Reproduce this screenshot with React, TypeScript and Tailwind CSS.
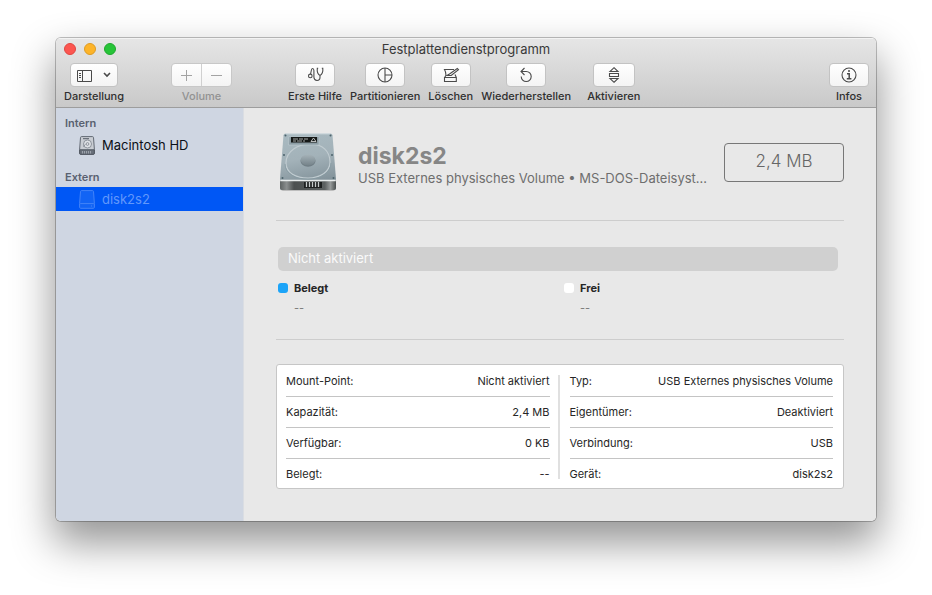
import type { ReactNode } from "react";

function ToolItem({
  label,
  children,
  className = "",
  buttonClass = "w-10",
}: {
  label: string;
  children: ReactNode;
  className?: string;
  buttonClass?: string;
}) {
  return (
    <button type="button" className={`flex shrink-0 flex-col items-center ${className}`}>
      <span
        className={`flex h-6 items-center justify-center rounded border border-[#c3c3c3] bg-linear-to-b from-white to-[#f4f4f4] text-[#4a4a4a] ${buttonClass}`}
      >
        {children}
      </span>
      <span className="mt-px whitespace-nowrap text-[11px] leading-4 font-medium">{label}</span>
    </button>
  );
}

function StrokeIcon({ children }: { children: ReactNode }) {
  return (
    <svg width="18" height="18" viewBox="0 0 18 18" fill="none" stroke="currentColor" strokeWidth="1.1" aria-hidden="true">
      {children}
    </svg>
  );
}

function SmallDrive() {
  return (
    <svg width="16" height="19" viewBox="0 0 16 19" fill="none" aria-hidden="true">
      <path d="M2.6 .6h10.8q1 0 1.100 1l.9 12v3.700q0 1-1 1H1.600q-1 0-1-1v-3.700l.9-12q.1-1 1.100-1z" fill="#c9cdd3" stroke="#626973" />
      <path d="M.7 13.800h14.600v3.600q0 .9-1 .9H1.700q-1 0-1-.9z" fill="#6a717b" stroke="#505761" />
      <path d="M3.500 15v2.500M5.500 15v2.500M7.500 15v2.500M9.500 15v2.500M11.500 15v2.500" stroke="#a9afb8" strokeWidth=".8" />
      <circle cx="8.500" cy="8" r="4" fill="#dfe2e6" stroke="#7b828c" strokeWidth=".8" />
      <circle cx="8.500" cy="8" r="1.400" stroke="#7b828c" strokeWidth=".8" />
      <path d="M4 2.700h6" stroke="#565d67" />
      <path d="M4 10.500l2.500-2" stroke="#7b828c" strokeWidth=".8" />
    </svg>
  );
}

function GhostDrive() {
  return (
    <svg width="16" height="19" viewBox="0 0 16 19" fill="none" stroke="#4a88f8" strokeWidth=".9" aria-hidden="true">
      <path d="M2.600 .6h10.800q1 0 1.100 1l.9 12v3.700q0 1-1 1H1.600q-1 0-1-1v-3.700l.9-12q.1-1 1.100-1z" fill="#1264f5" />
      <path d="M.7 14.200q.3-.6 1-.6h12.600q.7 0 1 .6M12 16h1" />
    </svg>
  );
}

function LargeDrive() {
  return (
    <svg className="shrink-0" width="64" height="64" viewBox="0 0 64 64" fill="none" aria-hidden="true">
      <defs>
        <linearGradient id="plate" x1="0" y1="0" x2="0.2" y2="1">
          <stop offset="0" stopColor="#a9bac1" />
          <stop offset="0.5" stopColor="#a3b2b9" />
          <stop offset="1" stopColor="#7f8f97" />
        </linearGradient>
        <linearGradient id="front" x1="0" y1="0" x2="1" y2="0">
          <stop offset="0" stopColor="#5e6363" />
          <stop offset="0.12" stopColor="#8b8f8f" />
          <stop offset="0.25" stopColor="#4c5050" />
          <stop offset="0.8" stopColor="#5c6161" />
          <stop offset="0.9" stopColor="#969a9a" />
          <stop offset="1" stopColor="#4a4f4f" />
        </linearGradient>
        <linearGradient id="hub" x1="0" y1="0" x2="0" y2="1">
          <stop offset="0" stopColor="#a5b2b8" />
          <stop offset="1" stopColor="#75838a" />
        </linearGradient>
      </defs>
      <rect x="5" y="57" width="54" height="4" rx="2" fill="#bdbdbd" />
      <path d="M9.500 3.500h45q1.800 0 2 1.800L60 49v9q0 2-2 2H6q-2 0-2-2v-9L7.500 5.300Q7.700 3.500 9.500 3.500z" fill="url(#plate)" />
      <path d="M9.500 3.800h45" stroke="#d4dde1" />
      <path d="M4 50h56v8q0 2-2 2H6q-2 0-2-2z" fill="url(#front)" />
      <path d="M4.200 50.500h55.600" stroke="#e9eded" strokeWidth="1.400" />
      <rect x="28" y="52" width="18" height="6" fill="#1d2020" />
      <path d="M30.500 52v5M33.500 52v5M36.500 52v5M39.500 52v5M42.500 52v5" stroke="#c5caca" strokeWidth="1.300" />
      <path d="M10 33c0 10 10 15 22 15s22-6 22-16c0-11-8-18-19-18C22 14 10 21 10 33z" stroke="#c1ccd1" strokeWidth="1.200" />
      <path d="M9 34c0 10 11 15.300 23 15.300S55 43 55 33" stroke="#879aa2" strokeWidth=".8" />
      <ellipse cx="32" cy="31" rx="7.500" ry="5.800" fill="#6f7d84" />
      <ellipse cx="32" cy="30" rx="7.300" ry="5.500" fill="url(#hub)" />
      <path d="M13 6.500h30V15H12.500z" fill="#8c9da5" stroke="#bbc8ce" strokeWidth=".7" />
      <rect x="15" y="7" width="26" height="5.500" fill="#151817" />
      <path d="M17 9h5m1 0h4m1 0h4M17 11h3m1 0h5m1 0h2" stroke="#c8cccc" strokeWidth=".8" />
      <path d="M35 11.500l2.500-3.500 2.500 3.500z" stroke="#e0e3e3" strokeWidth=".8" />
      <g fill="#4d626b">
        <circle cx="9.500" cy="5.500" r="1" />
        <circle cx="54.500" cy="5.500" r="1" />
        <circle cx="8" cy="25" r="1" />
        <circle cx="56" cy="25" r="1" />
        <circle cx="6.500" cy="48" r="1" />
        <circle cx="57.500" cy="48" r="1" />
      </g>
    </svg>
  );
}

function SidebarHeading({ children }: { children: ReactNode }) {
  return <h2 className="px-[9px] text-[11px] leading-4 font-semibold text-[#596170]">{children}</h2>;
}

function InfoTable({ rows }: { rows: [string, string][] }) {
  return (
    <table className="flex-1 border-separate border-spacing-0 text-[11px] leading-4">
      <tbody>
        {rows.map(([name, value]) => (
          <tr key={name} className="group">
            <th
              scope="row"
              className="h-[31px] border-b border-[#c4c4c4] p-0 text-left font-normal group-last:h-[29px] group-last:border-0"
            >
              {name}
            </th>
            <td className="border-b border-[#c4c4c4] p-0 text-right group-last:border-0">{value}</td>
          </tr>
        ))}
      </tbody>
    </table>
  );
}

function Legend({ color, label }: { color: string; label: string }) {
  return (
    <div className="flex-1">
      <dt className="flex items-center gap-1.5 text-[11px] leading-4 font-bold">
        <span className={`size-2.5 rounded-[3px] ${color}`} />
        {label}
      </dt>
      <dd className="mt-1 pl-4 text-[11px] leading-4 text-[#7b7b7b]">--</dd>
    </div>
  );
}

export default function App() {
  return (
    <div className="overflow-hidden bg-white px-14 pt-[38px] pb-[74px] font-['Inter','Liberation_Sans',sans-serif] text-[#262626]">
      <div className="rounded-[5px] shadow-[0_0_0_1px_rgba(0,0,0,0.24),0_20px_42px_2px_rgba(0,0,0,0.42)]">
        <div className="overflow-hidden rounded-[5px]">
          <header className="border-b border-[#9d9d9d] bg-linear-to-b from-[#e6e6e6] to-[#c9c9c9] pb-[3px] text-[#383838] shadow-[inset_0_1px_0_#f3f3f3]">
            <div className="grid h-[25px] grid-cols-[1fr_auto_1fr] items-start px-2">
              <div className="flex gap-2 pt-[5px]">
                <button type="button" aria-label="Schließen" className="size-3 rounded-full border border-[#df4640] bg-[#fc5650]" />
                <button type="button" aria-label="Minimieren" className="size-3 rounded-full border border-[#dd9b23] bg-[#fdb429]" />
                <button type="button" aria-label="Zoomen" className="size-3 rounded-full border border-[#1fa72d] bg-[#27c438]" />
              </div>
              <h1 className="pt-0.5 text-[13px] leading-[18px] text-[#3a3a3a]">Festplattendienstprogramm</h1>
            </div>
            <div className="flex pr-[7px] pl-2 text-[#303030]">
              <ToolItem label="Darstellung" buttonClass="w-12 gap-2.5">
                <svg width="16" height="13" viewBox="0 0 16 13" fill="none" stroke="currentColor" aria-hidden="true">
                  <path d="M.5 1.500h14v11H.500zM5.500 1.500v11M2 4.500h2M2 6.500h2M2 8.500h2" />
                </svg>
                <svg width="8" height="6" viewBox="0 0 8 6" fill="none" stroke="currentColor" strokeWidth="1.600" aria-hidden="true">
                  <path d="M1 1l3 3 3-3" />
                </svg>
              </ToolItem>
              <div role="group" aria-label="Volume" className="ml-[47px] flex shrink-0 flex-col items-center">
                <div className="flex h-6 w-[61px] divide-x divide-[#d0d0d0] rounded border border-[#c8c8c8] bg-linear-to-b from-white to-[#f4f4f4] text-[#a3a3a3]">
                  <button type="button" disabled aria-label="Volume hinzufügen" className="flex flex-1 items-center justify-center">
                    <svg width="13" height="13" viewBox="0 0 13 13" stroke="currentColor" aria-hidden="true">
                      <path d="M1 6.500h11M6.500 1v11" />
                    </svg>
                  </button>
                  <button type="button" disabled aria-label="Volume löschen" className="flex flex-1 items-center justify-center">
                    <svg width="13" height="13" viewBox="0 0 13 13" stroke="currentColor" aria-hidden="true">
                      <path d="M1 6.500h11" />
                    </svg>
                  </button>
                </div>
                <span className="mt-px text-[11px] leading-4 font-medium text-[#929292]">Volume</span>
              </div>
              <ToolItem label="Erste Hilfe" className="ml-14">
                <StrokeIcon>
                  <path d="M12.200 2.300h-.9q-.6 5.500 2.700 7.200 3.300-1.700 2.800-7.200h-1M14 9.500v1.800q0 3.200-3 3.200-2.800 0-3.100-3.200V4.500q-.1-2-1.300-2Q5.500 2.500 5.200 5l-.6 3" />
                  <circle cx="4.300" cy="9.900" r="1.800" />
                </StrokeIcon>
              </ToolItem>
              <ToolItem label="Partitionieren" className="ml-2">
                <StrokeIcon>
                  <circle cx="9" cy="9" r="7" />
                  <path d="M9 2v14M9 9h7" />
                </StrokeIcon>
              </ToolItem>
              <ToolItem label="Löschen" className="ml-2">
                <StrokeIcon>
                  <path d="M12 3.500H2.500q1.500 2.500 1.500 6M2.500 11.500h11.800v4H2.500zM2.500 11.500L4 9.500M13 8.500l1.300 3" />
                  <path d="M5 9.500h4.200L16.500 3.800 15.300 2.500 7.500 8z" />
                </StrokeIcon>
              </ToolItem>
              <ToolItem label="Wiederherstellen" className="ml-2">
                <StrokeIcon>
                  <path d="M4 5.500h5.200a5 5 0 1 1-5 5M7.500 2L4 5.500 7.500 9" />
                </StrokeIcon>
              </ToolItem>
              <ToolItem label="Aktivieren" className="ml-4" buttonClass="w-[42px]">
                <StrokeIcon>
                  <path d="M9 1.700L13 5.500H5zM9 16.300l4-3.800H5zM4.500 7.500h9M4.500 10.500h9M4.500 7v4M13.500 7v4" />
                </StrokeIcon>
              </ToolItem>
              <ToolItem label="Infos" className="ml-auto">
                <StrokeIcon>
                  <circle cx="9" cy="9" r="7" />
                  <path d="M7 7.700h2.200v5M6.800 12.700h4.600" strokeWidth="1.500" />
                  <circle cx="9" cy="5" r="1" fill="currentColor" stroke="none" />
                </StrokeIcon>
              </ToolItem>
            </div>
          </header>

          <div className="flex">
            <nav className="w-[188px] shrink-0 border-r border-[#dadde2] bg-[#cfd6e2] pt-[7px]">
              <SidebarHeading>Intern</SidebarHeading>
              <button type="button" className="flex h-7 w-full items-center gap-[7px] pt-px pl-[23px] text-[13px] text-[#0b0f16]">
                <SmallDrive />
                Macintosh HD
              </button>
              <div className="mt-2.5">
                <SidebarHeading>Extern</SidebarHeading>
              </div>
              <button
                type="button"
                aria-current="true"
                className="mt-0.5 flex h-6 w-full items-center gap-[7px] bg-[#0057f5] pt-px pl-[23px] text-[13px] text-[#6298fb]"
              >
                <GhostDrive />
                disk2s2
              </button>
            </nav>

            <main className="min-w-0 flex-1 bg-[#e8e8e8] px-8 pt-[22px] pb-8">
              <section className="flex items-center">
                <LargeDrive />
                <div className="ml-[18px] min-w-0 flex-1 pt-[3px]">
                  <h2 className="text-[23px] leading-7 font-bold text-[#868686]">disk2s2</h2>
                  <p className="whitespace-nowrap text-[13px] leading-4 text-[#6e6e6e]">
                    USB Externes physisches Volume • MS-DOS-Dateisyst…
                  </p>
                </div>
                <div className="ml-2 flex h-[39px] w-[120px] shrink-0 items-center justify-center rounded border border-[#777] text-[17px] font-light text-[#666]">
                  2,4 MB
                </div>
              </section>

              <section className="mt-[26px] border-y border-[#cdcdcd] pt-[26px] pb-[23px]">
                <div className="mr-1.5 ml-0.5 flex h-6 items-center rounded-[5px] bg-[#d0d0d0] px-2.5 text-[13px] text-[#fafafa]">
                  Nicht aktiviert
                </div>
                <dl className="mt-[9px] ml-0.5 flex gap-1.5">
                  <Legend color="bg-[#1ca4f8]" label="Belegt" />
                  <Legend color="bg-white" label="Frei" />
                </dl>
              </section>

              <section className="mt-6 flex rounded-[3px] border border-[#c6c6c6] bg-white pt-px pr-2.5 pl-[9px]">
                <InfoTable
                  rows={[
                    ["Mount-Point:", "Nicht aktiviert"],
                    ["Kapazität:", "2,4 MB"],
                    ["Verfügbar:", "0 KB"],
                    ["Belegt:", "--"],
                  ]}
                />
                <div className="my-[9px] mr-2.5 ml-2 w-0.5 bg-[#e0e0e0]" />
                <InfoTable
                  rows={[
                    ["Typ:", "USB Externes physisches Volume"],
                    ["Eigentümer:", "Deaktiviert"],
                    ["Verbindung:", "USB"],
                    ["Gerät:", "disk2s2"],
                  ]}
                />
              </section>
            </main>
          </div>
        </div>
      </div>
    </div>
  );
}
